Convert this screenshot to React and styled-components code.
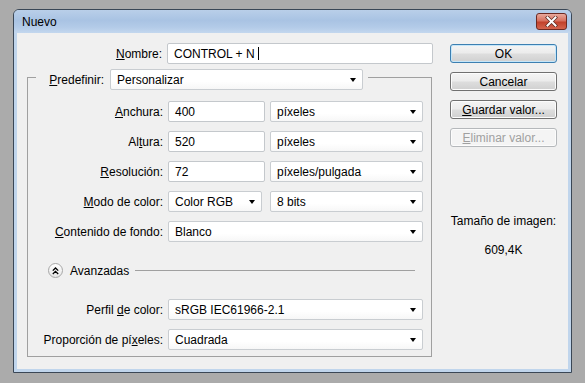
import React from 'react';
import styled, { createGlobalStyle } from 'styled-components';

const GlobalStyle = createGlobalStyle`
  html, body {
    margin: 0;
    background: #ababab;
    font-family: "Liberation Sans", Arial, sans-serif;
    font-size: 12px;
    color: #000;
  }
`;

const Window = styled.div`
  box-sizing: border-box;
  margin: 9px 0 0 13px;
  width: 559px;
  height: 364px;
  border: 1px solid #3a4756;
  border-radius: 6px 6px 0 0;
  background: #c0d5ec;
  padding: 0 3px 3px 3px;
  display: flex;
  flex-direction: column;
`;

const TitleBar = styled.div`
  height: 23px;
  display: flex;
  align-items: center;
  justify-content: space-between;
  padding: 0 1px 0 5px;
  background: linear-gradient(#b9cfe9, #a9c3e3 45%, #b3cbe8 75%, #c3d7ee);
  margin: 0 -3px;
  padding-left: 8px;
  padding-right: 4px;
  border-radius: 5px 5px 0 0;
  font-size: 12px;
  color: #000;
`;

const CloseButton = styled.div`
  box-sizing: border-box;
  width: 31px;
  height: 17px;
  border: 1px solid #6d2a22;
  border-radius: 3px;
  background: linear-gradient(#e9a99c, #d7705e 45%, #c2422c 55%, #d4654e);
  display: flex;
  align-items: center;
  justify-content: center;
`;

const Client = styled.div`
  flex: 1;
  background: #f0f0f0;
  display: flex;
  padding: 10px 10px 0 10px;
  gap: 17px;
`;

const LeftColumn = styled.div`
  width: 406px;
  display: flex;
  flex-direction: column;
`;

const Row = styled.div`
  display: flex;
  align-items: center;
  gap: 5px;
  height: 21px;
  margin-top: ${p => p.$top ?? 9}px;
`;

const Label = styled.span`
  width: ${p => p.$w ?? 135}px;
  text-align: right;
  white-space: nowrap;
  flex-shrink: 0;
`;

const U = styled.span`
  text-decoration: underline;
`;

const Input = styled.div`
  box-sizing: border-box;
  width: ${p => p.$w}px;
  height: 21px;
  border: 1px solid #c4c8cc;
  border-radius: 2px;
  background: #fff;
  padding-left: 6px;
  display: flex;
  align-items: center;
  white-space: pre;
`;

const Caret = styled.span`
  display: inline-block;
  width: 1px;
  height: 13px;
  background: #000;
`;

const Select = styled.div`
  box-sizing: border-box;
  width: ${p => p.$w}px;
  height: 21px;
  margin-left: ${p => p.$ml ?? 0}px;
  border: 1px solid #c9cdd1;
  border-radius: 2px;
  background: linear-gradient(#ffffff, #ffffff 60%, #f7f7f7);
  padding: 0 6px;
  display: flex;
  align-items: center;
  justify-content: space-between;
  white-space: nowrap;

  &::after {
    content: "";
    border-left: 3.5px solid transparent;
    border-right: 3.5px solid transparent;
    border-top: 4px solid #000;
    margin-top: 1px;
  }
`;

const Group = styled.fieldset`
  box-sizing: border-box;
  width: 405px;
  margin: 0;
  padding: 0 0 6px 0;
  border: 1px solid #a0a0a0;
  display: flex;
  flex-direction: column;
`;

const Legend = styled.legend`
  margin-left: 8px;
  padding: 5px 5px 0 8px;
  display: flex;
  align-items: center;
  gap: 6px;
`;

const AdvancedRow = styled.div`
  display: flex;
  align-items: center;
  height: 15px;
  margin-top: 21px;
  padding: 0 16px 0 20px;
`;

const RoundButton = styled.div`
  box-sizing: border-box;
  width: 15px;
  height: 15px;
  border-radius: 50%;
  border: 1px solid #a7a7a7;
  background: linear-gradient(#ffffff, #e6e6e6);
  display: flex;
  align-items: center;
  justify-content: center;
  margin-right: 7px;
`;

const Rule = styled.div`
  flex: 1;
  height: 0;
  border-top: 1px solid #a0a0a0;
  margin-left: 6px;
`;

const RightColumn = styled.div`
  width: 107px;
  display: flex;
  flex-direction: column;
  padding-top: 1px;
`;

const Button = styled.div`
  box-sizing: border-box;
  height: 19px;
  margin-bottom: 9px;
  border: 1px solid ${p => (p.$default ? '#3c7fb1' : p.$disabled ? '#b5b8bb' : '#707070')};
  border-radius: 3px;
  background: ${p =>
    p.$disabled
      ? '#f4f4f4'
      : 'linear-gradient(#f4f4f4, #ececec 45%, #dddddd 55%, #d0d0d0)'};
  box-shadow: ${p => (p.$default ? 'inset 0 0 0 1px #c5e6f9' : 'inset 0 0 0 1px #fcfcfc')};
  color: ${p => (p.$disabled ? '#a0a0a0' : '#000')};
  display: flex;
  align-items: center;
  justify-content: center;
`;

const SizeInfo = styled.div`
  margin-top: 58px;
  text-align: center;
  line-height: 14px;

  & > div + div {
    margin-top: 15px;
  }
`;

function App() {
  return (
    <>
      <GlobalStyle />
      <Window>
        <TitleBar>
          <span>Nuevo</span>
          <CloseButton>
            <svg width="13" height="11" viewBox="0 0 13 11">
              <path d="M2.5 1.5 L10.5 9.5 M10.5 1.5 L2.5 9.5" stroke="#5a2a22" strokeWidth="3.4" strokeLinecap="square" />
              <path d="M2.5 1.5 L10.5 9.5 M10.5 1.5 L2.5 9.5" stroke="#fff" strokeWidth="2" strokeLinecap="square" />
            </svg>
          </CloseButton>
        </TitleBar>
        <Client>
          <LeftColumn>
            <Row $top={0}>
              <Label>
                <U>N</U>ombre:
              </Label>
              <Input $w={266}>
                CONTROL + N <Caret />
              </Input>
            </Row>
            <Group>
              <Legend>
                <Label $w={60}>
                  <U>P</U>redefinir:
                </Label>
                <Select $w={253}>Personalizar</Select>
              </Legend>
              <Row $top={11}>
                <Label>
                  <U>A</U>nchura:
                </Label>
                <Input $w={97}>400</Input>
                <Select $w={153}>píxeles</Select>
              </Row>
              <Row>
                <Label>
                  Al<U>t</U>ura:
                </Label>
                <Input $w={97}>520</Input>
                <Select $w={153}>píxeles</Select>
              </Row>
              <Row>
                <Label>
                  <U>R</U>esolución:
                </Label>
                <Input $w={97}>72</Input>
                <Select $w={153}>píxeles/pulgada</Select>
              </Row>
              <Row>
                <Label>
                  <U>M</U>odo de color:
                </Label>
                <Select $w={94}>Color RGB</Select>
                <Select $w={153} $ml={3}>8 bits</Select>
              </Row>
              <Row>
                <Label>
                  <U>C</U>ontenido de fondo:
                </Label>
                <Select $w={255}>Blanco</Select>
              </Row>
              <AdvancedRow>
                <RoundButton>
                  <svg width="7" height="8" viewBox="0 0 7 8">
                    <path d="M0.8 3.6 L3.5 1 L6.2 3.6 M0.8 7 L3.5 4.4 L6.2 7" stroke="#000" strokeWidth="1.3" fill="none" />
                  </svg>
                </RoundButton>
                <span>Avanzadas</span>
                <Rule />
              </AdvancedRow>
              <Row $top={21}>
                <Label>
                  Perfil <U>d</U>e color:
                </Label>
                <Select $w={255}>sRGB IEC61966-2.1</Select>
              </Row>
              <Row>
                <Label>
                  Proporción de pí<U>x</U>eles:
                </Label>
                <Select $w={255}>Cuadrada</Select>
              </Row>
            </Group>
          </LeftColumn>
          <RightColumn>
            <Button $default>OK</Button>
            <Button>Cancelar</Button>
            <Button>
              <span>
                <U>G</U>uardar valor...
              </span>
            </Button>
            <Button $disabled>
              <span>
                <U>E</U>liminar valor...
              </span>
            </Button>
            <SizeInfo>
              <div>Tamaño de imagen:</div>
              <div>609,4K</div>
            </SizeInfo>
          </RightColumn>
        </Client>
      </Window>
    </>
  );
}

export default App;
